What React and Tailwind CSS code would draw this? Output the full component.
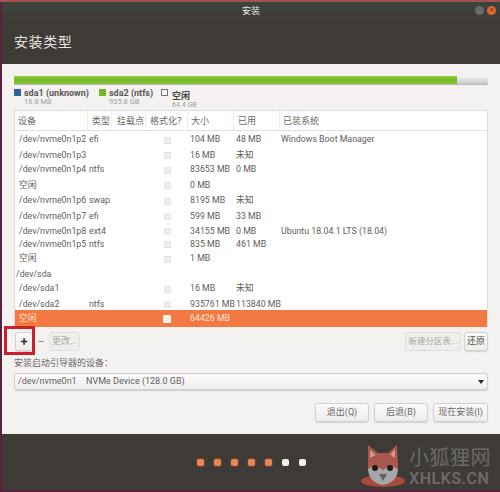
const cols = "grid grid-cols-[73px_24px_34px_42px_46px_46px_1fr]";

const rows = [
  { d: "/dev/nvme0n1p2", t: "efi", s: "104 MB", u: "48 MB", o: "Windows Boot Manager", h: "h-[16px]" },
  { d: "/dev/nvme0n1p3", s: "16 MB", u: "未知", h: "h-[14px]" },
  { d: "/dev/nvme0n1p4", t: "ntfs", s: "83653 MB", u: "0 MB", h: "h-[16px]" },
  { d: "空闲", s: "0 MB", h: "h-[15px]" },
  { d: "/dev/nvme0n1p6", t: "swap", s: "8195 MB", u: "未知", h: "h-[16px]" },
  { d: "/dev/nvme0n1p7", t: "efi", s: "599 MB", u: "33 MB", h: "h-[15px]" },
  { d: "/dev/nvme0n1p8", t: "ext4", s: "34155 MB", u: "0 MB", o: "Ubuntu 18.04.1 LTS (18.04)", h: "h-[13px]" },
  { d: "/dev/nvme0n1p5", t: "ntfs", s: "835 MB", u: "461 MB", h: "h-[14px]" },
  { d: "空闲", s: "1 MB", h: "h-[16px]" },
  { d: "/dev/sda", root: true, h: "h-[14px]" },
  { d: "/dev/sda1", s: "16 MB", u: "未知", h: "h-[16px]" },
  { d: "/dev/sda2", t: "ntfs", s: "935761 MB", u: "113840 MB", h: "h-[14px]" },
  { d: "空闲", s: "64426 MB", sel: true, h: "h-[17px]" },
];

const heads = [
  ["设备", "pl-[3px]"],
  ["类型", "pl-1"],
  ["挂载点", "pl-[5px]"],
  ["格式化？", "pl-1"],
  ["大小", "pl-[3px]"],
  ["已用", "pl-[4px]"],
  ["已装系统", "pl-[3px]"],
];

function Btn({ children, className = "", disabled }) {
  return (
    <div
      className={`flex items-center justify-center whitespace-nowrap rounded-[3px] border text-[9px] ${
        disabled
          ? "border-[#e2e0de] bg-[#efeeec] text-[#a9a7a4]"
          : "border-[#d3d1ce] bg-gradient-to-b from-[#fbfafa] to-[#eeedeb] text-[#6a6865] shadow-[0_1px_1px_rgba(0,0,0,0.12)]"
      } ${className}`}
    >
      {children}
    </div>
  );
}

function Fox() {
  return (
    <svg width="46" height="46" viewBox="0 0 46 46" className="shrink-0">
      <ellipse cx="23" cy="37" rx="22" ry="6" fill="#a64b3e" />
      <path d="M8 20 L8 1 L18 9 L28 9 L37 1 L38 20 L36 32 L10 32 Z" fill="#a9574c" />
      <path d="M10 14 L10 6 L16 11 Z" fill="#d59a8a" />
      <path d="M35 14 L35 5 L30 11 Z" fill="#d59a8a" />
      <circle cx="23" cy="24" r="15" fill="#a9574c" />
      <path d="M8 25 Q15 20 23 26 Q31 20 38 25 Q37 39 23 41 Q9 39 8 25 Z" fill="#a7a6a6" />
      <circle cx="15" cy="24" r="3" fill="#211a18" />
      <circle cx="30" cy="24" r="3" fill="#211a18" />
      <path d="M19 30 L27 30 L23 37 Z" fill="#5f6466" />
    </svg>
  );
}

export default function App() {
  return (
    <div
      className="relative h-[492px] w-[500px] overflow-hidden bg-[#5c1f3c] pl-[2px] pt-[2px] pb-[2px]"
      style={{ fontFamily: 'Roboto, "Noto Sans CJK SC", sans-serif' }}
    >
      <div className="absolute inset-x-0 top-0 h-[2px] bg-[#a8524f]" />
      <div className="flex h-full w-full flex-col">
        {/* header */}
        <div className="relative h-[62px] shrink-0 bg-[#3e3b37]">
          <div className="flex h-[19px] items-center justify-center bg-gradient-to-b from-[#3b4440] to-[#3e3b37] text-[9px] text-[#ecebe9]">
            安装
          </div>
          <div className="absolute right-[4px] top-[4px] flex items-center gap-[3px]">
            <div className="h-[9px] w-[9px] rounded-full bg-[#6b6a66]" />
            <div className="flex h-[9px] w-[9px] items-center justify-center rounded-full bg-[#e4632e] text-[7px] leading-none text-[#3e3b37]">
              ×
            </div>
          </div>
          <div className="pl-[12px] pt-[11px] text-[14px] leading-[20px] tracking-[0.6px] text-[#e6e4e1]">
            安装类型
          </div>
        </div>

        {/* body */}
        <div className="flex h-[370px] shrink-0 flex-col bg-[#f3f2f1] px-3 pt-3">
          {/* usage bar */}
          <div className="flex h-[9px] shrink-0 overflow-hidden rounded-[1px] border-b border-[#b9b7b4]">
            <div className="w-[443px] bg-gradient-to-b from-[#8fcf3a] via-[#74b62b] to-[#86c534]" />
            <div className="flex-1 bg-gradient-to-b from-[#f5f5f4] to-[#c9c8c6]" />
          </div>

          {/* legend */}
          <div className="mt-[3px] flex h-[20px] shrink-0 overflow-hidden whitespace-nowrap text-[9px] leading-[10px]">
            <div className="flex w-[85px] shrink-0 gap-[3px]">
              <div className="mt-[1px] h-[7px] w-[7px] shrink-0 bg-[#2f6396]" />
              <div>
                <div className="font-bold text-[#5a5855]">sda1 (unknown)</div>
                <div className="text-[7.5px] leading-[8px] text-[#a09e9b]">16.8 MB</div>
              </div>
            </div>
            <div className="flex w-[62px] shrink-0 gap-[3px]">
              <div className="mt-[1px] h-[7px] w-[7px] shrink-0 bg-[#72b52a]" />
              <div>
                <div className="font-bold text-[#5a5855]">sda2 (ntfs)</div>
                <div className="text-[7.5px] leading-[8px] text-[#a09e9b]">935.8 GB</div>
              </div>
            </div>
            <div className="flex gap-[4px]">
              <div className="mt-[1px] h-[7px] w-[7px] shrink-0 border border-[#77756f] bg-white" />
              <div className="pt-[3px]">
                <div className="font-bold text-[#4a4845]">空闲</div>
                <div className="text-[7px] leading-[8px] text-[#a09e9b]">64.4 GB</div>
              </div>
            </div>
          </div>

          {/* table */}
          <div className="mt-[2px] flex h-[217px] shrink-0 flex-col border-x border-t border-[#dedcda] bg-white">
            <div className={`${cols} h-[20px] shrink-0 items-center border-b border-[#e3e1df] text-[9px] text-[#6a6865]`}>
              {heads.map(([h, p], i) => (
                <div key={h} className={`flex h-full items-center whitespace-nowrap pt-[2px] ${p} ${i < 6 ? "border-r border-[#efeeec]" : ""}`}>
                  {h}
                </div>
              ))}
            </div>
            <div className="flex flex-col">
              {rows.map((r, i) => (
                <div
                  key={i}
                  className={`${cols} ${r.h} items-center whitespace-nowrap text-[8.8px] ${
                    r.sel ? "bg-[#f27a42] text-[#fbe3d6]" : "pt-[2px] text-[#5f5d5a]"
                  }`}
                >
                  <div className={r.root ? "pl-[1px]" : "pl-[4px]"}>{r.d}</div>
                  <div className="pl-[1px]">{r.t}</div>
                  <div />
                  <div className="flex justify-center">
                    {!r.root && (
                      <div
                        className={
                          r.sel
                            ? "h-[8px] w-[8px] rounded-[1px] border border-[#f8f3f0] bg-[#f9efe9]"
                            : "h-[7px] w-[7px] rounded-[1px] border border-[#e4e3e1] bg-[#efeeed]"
                        }
                      />
                    )}
                  </div>
                  <div className="pl-[2px]">{r.s}</div>
                  <div className="pl-[2px]">{r.u}</div>
                  <div className="pl-[1px]">{r.o}</div>
                </div>
              ))}
            </div>
          </div>

          {/* table toolbar */}
          <div className="mt-[5px] flex h-[19px] shrink-0 items-stretch pl-[1px]">
            <Btn className="w-[18px] text-[13px] font-semibold leading-none !text-[#33312e]">+</Btn>
            <div className="flex w-[16px] items-center justify-center text-[13px] text-[#8f8d8a]">−</div>
            <Btn disabled className="w-[31px]">更改...</Btn>
            <div className="flex-1" />
            <Btn disabled className="w-[56px] !text-[8.5px]">新建分区表...</Btn>
            <Btn className="ml-[3px] w-[24px] !text-[#55534f]">还原</Btn>
          </div>

          <div className="mt-[5px] h-[14px] shrink-0 text-[9px] leading-[14px] text-[#6a6865]">
            安装启动引导器的设备：
          </div>

          {/* select */}
          <div className="mt-[3px] flex h-[17px] shrink-0 items-center rounded-[3px] border border-[#d2d0cd] bg-gradient-to-b from-[#fcfbfb] to-[#f1f0ef] pl-[3px] pr-[3px] text-[9px] text-[#5f5d5a] shadow-[0_1px_1px_rgba(0,0,0,0.15)]">
            <span className="w-[68px]">/dev/nvme0n1</span>
            <span>NVMe Device (128.0 GB)</span>
            <div className="ml-auto h-0 w-0 border-x-[3.5px] border-t-[4px] border-x-transparent border-t-[#2b2a28]" />
          </div>

          {/* actions */}
          <div className="mt-[13px] flex h-[19px] shrink-0 justify-end gap-[5px]">
            <Btn className="w-[54px]">退出(Q)</Btn>
            <Btn className="w-[54px]">后退(B)</Btn>
            <Btn className="w-[55px]">现在安装(I)</Btn>
          </div>
        </div>

        {/* footer */}
        <div className="flex flex-1 items-center justify-center bg-[#3e3b37] pt-[1px]">
          <div className="flex gap-[10px]">
            {["a", "b", "c", "d", "e"].map((k) => (
              <div key={k} className="h-[7px] w-[7px] rounded-[2px] bg-[#ec8350] shadow-[0_0_2px_#b56a45]" />
            ))}
            {["f", "g"].map((k) => (
              <div key={k} className="h-[7px] w-[7px] rounded-[2px] bg-[#f1efec]" />
            ))}
          </div>
        </div>
      </div>

      {/* annotation highlighting the add button */}
      <div className="pointer-events-none absolute left-[4px] top-[326px] h-[29px] w-[31px] border-[3px] border-[#c9202b]" />

      {/* watermark */}
      <div className="pointer-events-none absolute left-[360px] top-[444px] flex items-center gap-[3px]">
        <Fox />
        <div className="flex flex-col text-[#6c6a68]">
          <div className="text-[20px] leading-[24px] tracking-[0.5px]">小狐狸网</div>
          <div className="text-[16px] font-semibold leading-[18px] tracking-[0.5px]">XHLKS.CN</div>
        </div>
      </div>
    </div>
  );
}
